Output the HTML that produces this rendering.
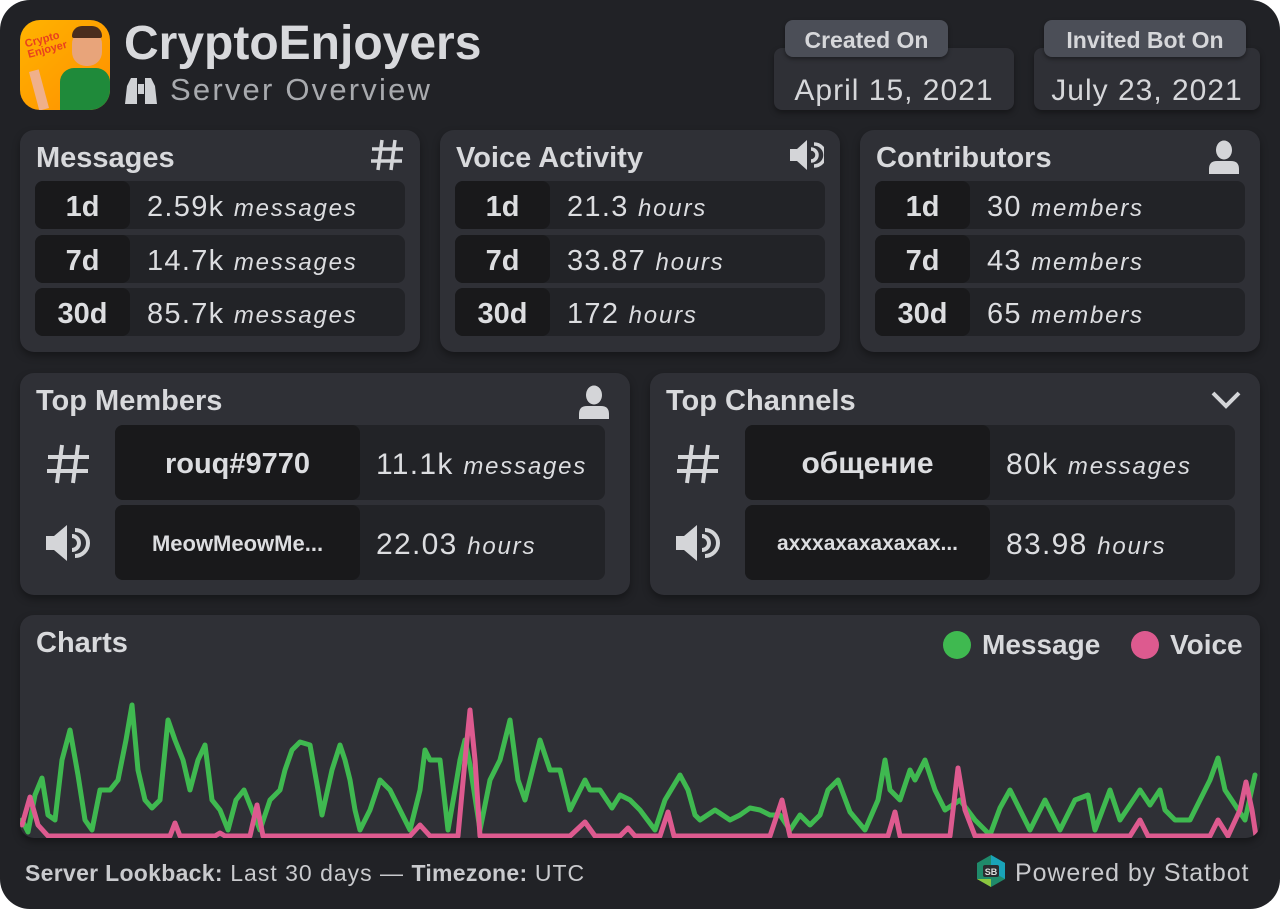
<!DOCTYPE html>
<html><head><meta charset="utf-8"><style>
*{margin:0;padding:0;box-sizing:border-box}
body{width:1280px;height:909px;background:#fff;font-family:"Liberation Sans",sans-serif;color:#dcdde0;overflow:hidden;position:relative}
.wrap{position:absolute;left:0;top:0;width:1280px;height:909px;background:#212226;border-radius:30px}
.abs{position:absolute}
.panel{position:absolute;background:#2f3036;border-radius:14px;box-shadow:0 4px 8px rgba(0,0,0,.35)}
.ptitle{position:absolute;left:16px;top:12px;font-size:29px;font-weight:bold;color:#d8d9dc}
.row{position:absolute;left:15px;width:370px;height:48px;background:#222327;border-radius:8px}
.lab{position:absolute;left:0;top:0;width:95px;height:48px;background:#19191b;border-radius:8px;font-size:29px;font-weight:bold;text-align:center;line-height:52px;color:#dcdde0}
.val{position:absolute;left:112px;top:0;line-height:52px;font-size:29px;color:#dcdde0;letter-spacing:1.3px}
.val i{font-size:24px;letter-spacing:1.8px}
.icon{position:absolute}
.trow{position:absolute;left:95px;width:490px;height:75px;background:#222327;border-radius:8px}
.tname{position:absolute;left:0;top:0;width:245px;height:75px;background:#19191b;border-radius:8px;text-align:center;line-height:78px;font-weight:bold;color:#dcdde0}
.tval{position:absolute;left:261px;top:0;line-height:79px;font-size:30px;letter-spacing:1.3px}
.tval i{font-size:24px;letter-spacing:1.8px}
.tab{position:absolute;background:#4b4e57;border-radius:8px;font-size:23px;font-weight:bold;text-align:center;line-height:40px;color:#d6d7da;box-shadow:0 2px 4px rgba(0,0,0,.4)}
.date{position:absolute;background:#2f3036;border-radius:8px;font-size:30px;text-align:center;line-height:66px;padding-top:10px;color:#d6d7da;box-shadow:0 3px 6px rgba(0,0,0,.35);letter-spacing:1px}
</style></head><body><div class="wrap">

<div class="abs" style="left:20px;top:20px;width:90px;height:90px;border-radius:20px;background:linear-gradient(135deg,#ffb300,#ff8f00);overflow:hidden">
 <div class="abs" style="left:6px;top:14px;font-size:11px;font-weight:bold;color:#e8401e;transform:rotate(-15deg);line-height:11px">Crypto<br>Enjoyer</div>
 <div class="abs" style="left:52px;top:10px;width:30px;height:36px;border-radius:14px;background:#e8a47a"></div>
 <div class="abs" style="left:52px;top:6px;width:30px;height:12px;border-radius:10px 10px 2px 2px;background:#4a2d1e"></div>
 <div class="abs" style="left:40px;top:48px;width:50px;height:50px;border-radius:14px 14px 0 0;background:#1f8a3a"></div>
 <div class="abs" style="left:14px;top:50px;width:10px;height:40px;background:#f0b08a;transform:rotate(-15deg)"></div>
</div>
<div class="abs" style="left:124px;top:16px;font-size:48px;font-weight:bold;color:#d8d9dc">CryptoEnjoyers</div>
<svg class="abs" style="left:122px;top:74px" width="38" height="32" viewBox="0 0 38 32"><path d="M3 30 L5 12 L9 4 L15 4 L15 30 Z M23 30 L23 4 L29 4 L33 12 L35 30 Z" fill="#cfd1d4"/><rect x="16" y="10" width="6" height="10" fill="#cfd1d4"/></svg>
<div class="abs" style="left:170px;top:72px;font-size:31px;color:#a8aaae;letter-spacing:2.2px">Server Overview</div>

<div class="date" style="left:774px;top:48px;width:240px;height:62px">April 15, 2021</div>
<div class="tab" style="left:785px;top:20px;width:163px;height:37px">Created On</div>
<div class="date" style="left:1034px;top:48px;width:226px;height:62px">July 23, 2021</div>
<div class="tab" style="left:1044px;top:20px;width:202px;height:37px">Invited Bot On</div>

<div class="panel" style="left:20px;top:130px;width:400px;height:222px">
 <div class="ptitle">Messages</div>
 <svg class="icon" style="left:350px;top:8px" width="34" height="34" viewBox="0 0 34 34" stroke="#d4d5d8" stroke-width="3.5" fill="none"><path d="M12 2 L8 32 M25 2 L21 32 M2 11 H33 M1 23 H32"/></svg>
 <div class="row" style="top:51px"><div class="lab">1d</div><div class="val">2.59k <i>messages</i></div></div>
 <div class="row" style="top:105px"><div class="lab">7d</div><div class="val">14.7k <i>messages</i></div></div>
 <div class="row" style="top:158px"><div class="lab">30d</div><div class="val">85.7k <i>messages</i></div></div>
</div>
<div class="panel" style="left:440px;top:130px;width:400px;height:222px">
 <div class="ptitle">Voice Activity</div>
 <svg class="icon" style="left:348px;top:8px" width="36" height="34" viewBox="0 0 36 34"><path d="M2 11 H9 L19 2 V32 L9 23 H2 Z" fill="#d4d5d8"/><path d="M23 11 A6 6 0 0 1 23 23 M26 6 A11 11 0 0 1 26 28" stroke="#d4d5d8" stroke-width="3.5" fill="none"/></svg>
 <div class="row" style="top:51px"><div class="lab">1d</div><div class="val">21.3 <i>hours</i></div></div>
 <div class="row" style="top:105px"><div class="lab">7d</div><div class="val">33.87 <i>hours</i></div></div>
 <div class="row" style="top:158px"><div class="lab">30d</div><div class="val">172 <i>hours</i></div></div>
</div>
<div class="panel" style="left:860px;top:130px;width:400px;height:222px">
 <div class="ptitle">Contributors</div>
 <svg class="icon" style="left:348px;top:10px" width="32" height="34" viewBox="0 0 32 34" fill="#d4d5d8"><ellipse cx="16" cy="10" rx="8" ry="9.5"/><path d="M1 34 V29 Q1 21 9 21 H23 Q31 21 31 29 V34 Z"/></svg>
 <div class="row" style="top:51px"><div class="lab">1d</div><div class="val">30 <i>members</i></div></div>
 <div class="row" style="top:105px"><div class="lab">7d</div><div class="val">43 <i>members</i></div></div>
 <div class="row" style="top:158px"><div class="lab">30d</div><div class="val">65 <i>members</i></div></div>
</div>

<div class="panel" style="left:20px;top:373px;width:610px;height:222px">
 <div class="ptitle">Top Members</div>
 <svg class="icon" style="left:558px;top:12px" width="32" height="34" viewBox="0 0 32 34" fill="#d4d5d8"><ellipse cx="16" cy="10" rx="8" ry="9.5"/><path d="M1 34 V29 Q1 21 9 21 H23 Q31 21 31 29 V34 Z"/></svg>
 <svg class="icon" style="left:25px;top:70px" width="46" height="42" viewBox="0 0 46 42" stroke="#d4d5d8" stroke-width="4" fill="none"><path d="M17 2 L12 40 M33 2 L28 40 M3 14 H44 M2 28 H43"/></svg>
 <div class="trow" style="top:52px"><div class="tname" style="font-size:29px">rouq#9770</div><div class="tval">11.1k <i>messages</i></div></div>
 <svg class="icon" style="left:24px;top:150px" width="46" height="40" viewBox="0 0 46 40"><path d="M2 13 H10 L23 2 V38 L10 27 H2 Z" fill="#d4d5d8"/><path d="M28 13 A7 7 0 0 1 28 27 M31 7 A13 13 0 0 1 31 33" stroke="#d4d5d8" stroke-width="4" fill="none"/></svg>
 <div class="trow" style="top:132px"><div class="tname" style="font-size:22px">MeowMeowMe...</div><div class="tval">22.03 <i>hours</i></div></div>
</div>
<div class="panel" style="left:650px;top:373px;width:610px;height:222px">
 <div class="ptitle">Top Channels</div>
 <svg class="icon" style="left:560px;top:16px" width="32" height="22" viewBox="0 0 32 22" stroke="#d4d5d8" stroke-width="4" fill="none"><path d="M3 4 L16 17 L29 4"/></svg>
 <svg class="icon" style="left:25px;top:70px" width="46" height="42" viewBox="0 0 46 42" stroke="#d4d5d8" stroke-width="4" fill="none"><path d="M17 2 L12 40 M33 2 L28 40 M3 14 H44 M2 28 H43"/></svg>
 <div class="trow" style="top:52px"><div class="tname" style="font-size:30px">общение</div><div class="tval">80k <i>messages</i></div></div>
 <svg class="icon" style="left:24px;top:150px" width="46" height="40" viewBox="0 0 46 40"><path d="M2 13 H10 L23 2 V38 L10 27 H2 Z" fill="#d4d5d8"/><path d="M28 13 A7 7 0 0 1 28 27 M31 7 A13 13 0 0 1 31 33" stroke="#d4d5d8" stroke-width="4" fill="none"/></svg>
 <div class="trow" style="top:132px"><div class="tname" style="font-size:21px">ахххахахахахах...</div><div class="tval">83.98 <i>hours</i></div></div>
</div>

<div class="panel" style="left:20px;top:615px;width:1240px;height:223px;overflow:hidden">
 <div class="ptitle" style="top:12px">Charts</div>
 <div class="abs" style="left:923px;top:16px;width:28px;height:28px;border-radius:50%;background:#3fb950"></div>
 <div class="abs" style="left:962px;top:14px;font-size:28px;font-weight:bold;color:#d8d9dc">Message</div>
 <div class="abs" style="left:1111px;top:16px;width:28px;height:28px;border-radius:50%;background:#dd5a8f"></div>
 <div class="abs" style="left:1150px;top:14px;font-size:28px;font-weight:bold;color:#d8d9dc">Voice</div>
</div>
<svg class="abs" style="left:0;top:0" width="1280" height="909">
<defs><clipPath id="c"><rect x="20" y="615" width="1240" height="223" rx="14"/></clipPath></defs>
<g clip-path="url(#c)" fill="none" stroke-width="5" stroke-linejoin="round" stroke-linecap="round">
<polyline stroke="#3fb950" points="22,820 28,832 35,795 42,778 48,815 55,820 62,760 70,730 78,775 85,820 92,830 100,790 110,790 118,780 126,740 132,705 138,770 145,800 152,808 160,800 168,720 175,740 183,760 190,790 198,760 205,745 212,800 220,810 228,830 236,800 244,790 252,810 260,830 270,800 280,790 285,770 292,750 300,742 310,745 318,790 322,815 332,770 340,745 345,760 350,780 355,810 360,830 370,810 380,780 390,790 400,810 410,830 420,790 425,750 430,760 440,760 448,830 455,790 460,760 465,740 470,765 480,830 490,780 500,760 510,720 518,780 525,800 535,760 540,740 550,770 560,770 570,810 575,800 585,780 590,790 600,790 612,808 620,795 630,800 640,810 655,830 665,800 680,775 688,790 695,815 700,820 715,810 730,820 740,815 750,808 760,810 770,815 780,815 790,830 800,815 810,825 820,815 828,790 838,780 850,812 865,830 878,800 885,760 890,790 900,800 910,770 915,780 925,760 935,790 945,810 960,800 975,820 990,835 1000,808 1010,790 1020,810 1030,830 1045,800 1060,830 1075,800 1088,795 1095,830 1110,790 1120,820 1140,790 1150,805 1160,790 1165,810 1175,820 1190,820 1205,790 1210,780 1218,758 1225,790 1235,805 1245,820 1255,775"/>
<polyline stroke="#dd5a8f" points="22,825 30,797 38,825 48,836 170,836 175,823 180,836 215,836 220,833 225,836 250,836 257,805 263,836 410,836 420,825 430,836 458,836 465,760 470,710 475,760 480,836 570,836 585,822 595,836 620,836 628,828 635,836 660,836 668,812 674,836 770,836 782,800 790,836 888,836 895,812 900,836 950,836 958,768 965,810 975,836 1130,836 1140,820 1148,836 1210,836 1218,820 1228,836 1240,810 1246,782 1252,810 1256,836"/>
</g></svg>

<div class="abs" style="left:25px;top:860px;font-size:23px;color:#c9cacd;letter-spacing:1px"><b style="letter-spacing:0.3px">Server Lookback:</b> Last 30 days — <b style="letter-spacing:0.3px">Timezone:</b> UTC</div>
<svg class="abs" style="left:975px;top:854px" width="32" height="34" viewBox="0 0 32 34"><path d="M16 1 L30 9 V25 L16 33 L2 25 V9 Z" fill="#1f8a6a"/><path d="M16 1 L30 9 V25 L16 17 Z" fill="#19a3b8"/><path d="M2 25 L16 33 L16 25 Z" fill="#8cc63f"/><rect x="8" y="11" width="16" height="12" rx="2" fill="#2a2b2f"/><text x="16" y="21" font-size="9" font-weight="bold" fill="#ddd" text-anchor="middle" font-family="Liberation Sans">SB</text></svg>
<div class="abs" style="left:1015px;top:859px;font-size:25px;color:#c9cacd;letter-spacing:0.9px">Powered by Statbot</div>
</div></body></html>
